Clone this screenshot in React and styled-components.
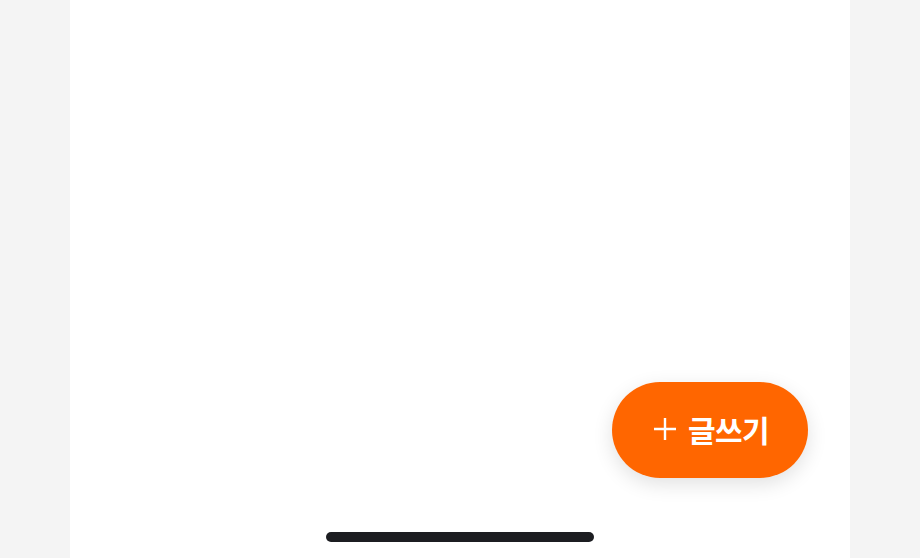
import React from 'react';
import styled, { createGlobalStyle } from 'styled-components';

const GlobalStyle = createGlobalStyle`
  html, body {
    margin: 0;
    padding: 0;
    background: #f4f4f4;
    font-family: 'Noto Sans CJK KR', 'Noto Sans', sans-serif;
  }
`;

const Page = styled.div`
  display: flex;
  justify-content: center;
  height: 100vh;
  background: #f4f4f4;
`;

const Phone = styled.main`
  width: 780px;
  height: 100%;
  background: #ffffff;
  display: flex;
  flex-direction: column;
  justify-content: flex-end;
  box-sizing: border-box;
  padding-bottom: 16px;
`;

const FabRow = styled.div`
  display: flex;
  justify-content: flex-end;
  padding-right: 42px;
  margin-bottom: 54px;
`;

const WriteButton = styled.button`
  display: flex;
  align-items: center;
  justify-content: center;
  gap: 11px;
  width: 196px;
  height: 96px;
  border: none;
  border-radius: 48px;
  background: #ff6600;
  color: #ffffff;
  font-family: 'Noto Sans CJK KR', 'Noto Sans', sans-serif;
  font-size: 30px;
  font-weight: 700;
  letter-spacing: -0.6px;
  box-shadow: 0 6px 20px rgba(0, 0, 0, 0.12);
  padding: 0 0 2px 2px;
  cursor: pointer;
`;

const HomeIndicator = styled.div`
  align-self: center;
  width: 268px;
  height: 10px;
  border-radius: 5px;
  background: #1c1d21;
`;

function PlusIcon() {
  return (
    <svg width="24" height="24" viewBox="0 0 24 24" fill="none">
      <path d="M12 1v22M1 12h22" stroke="#fff" strokeWidth="2.4" strokeLinecap="butt" />
    </svg>
  );
}

export default function App() {
  return (
    <>
      <GlobalStyle />
      <Page>
        <Phone>
          <FabRow>
            <WriteButton>
              <PlusIcon />
              <span>글쓰기</span>
            </WriteButton>
          </FabRow>
          <HomeIndicator />
        </Phone>
      </Page>
    </>
  );
}
